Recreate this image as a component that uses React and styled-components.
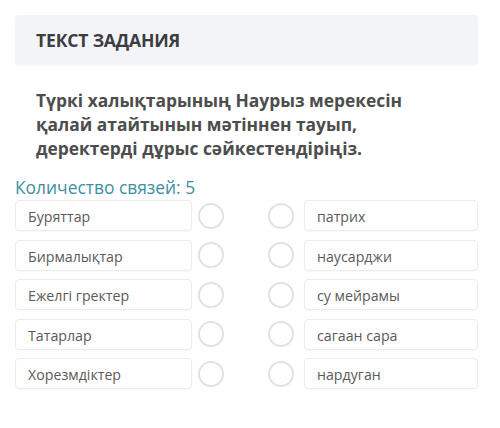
import React from "react";
import styled, { createGlobalStyle } from "styled-components";

const Global = createGlobalStyle`
  html, body { margin: 0; padding: 0; background: #ffffff; }
  body { font-family: "Open Sans", "Noto Sans", sans-serif; }
`;

const Page = styled.div`
  width: 500px;
  height: 428px;
  padding: 15px 22px 0 15px;
  box-sizing: border-box;
  display: flex;
  flex-direction: column;
`;

const HeaderBox = styled.div`
  height: 50px;
  width: 463px;
  background: #f3f4f8;
  border-radius: 4px;
  box-shadow: 0 1px 2px rgba(0, 0, 0, 0.04);
  display: flex;
  align-items: center;
  padding-left: 21px;
  box-sizing: border-box;
  font-weight: 700;
  font-size: 17.6px;
  color: #3b3d42;
  letter-spacing: -0.2px;
`;

const Question = styled.div`
  margin-top: 23px;
  padding-left: 21px;
  font-weight: 700;
  font-size: 17.4px;
  line-height: 24px;
  color: #4d4d4d;
`;

const Count = styled.div`
  margin-top: 17px;
  font-size: 17.4px;
  line-height: 20px;
  color: #3d8fa1;
`;

const Rows = styled.div`
  margin-top: 3px;
  display: flex;
  flex-direction: column;
  gap: 8.5px;
`;

const Row = styled.div`
  display: flex;
  align-items: center;
  height: 31px;
`;

const Item = styled.div`
  width: ${(p) => p.$w}px;
  height: 31px;
  box-sizing: border-box;
  border: 1px solid #ececec;
  border-radius: 4px;
  box-shadow: 0 1px 2px rgba(0, 0, 0, 0.03);
  display: flex;
  align-items: center;
  padding: 2px 0 0 12px;
  font-size: 14.2px;
  color: #5a5a5a;
`;

const Dot = styled.div`
  width: 26px;
  height: 26px;
  box-sizing: border-box;
  border: 2px solid #e2e2e2;
  border-radius: 50%;
  margin-left: ${(p) => p.$ml}px;
  flex: none;
`;

const left = ["Буряттар", "Бирмалықтар", "Ежелгі гректер", "Татарлар", "Хорезмдіктер"];
const right = ["патрих", "наусарджи", "су мейрамы", "сагаан сара", "нардуган"];

export default function App() {
  return (
    <>
      <Global />
      <Page>
        <HeaderBox>ТЕКСТ ЗАДАНИЯ</HeaderBox>
        <Question>
          Түркі халықтарының Наурыз мерекесін
          <br />
          қалай атайтынын мәтіннен тауып,
          <br />
          деректерді дұрыс сәйкестендіріңіз.
        </Question>
        <Count>Количество связей: 5</Count>
        <Rows>
          {left.map((l, i) => (
            <Row key={i}>
              <Item $w={177}>{l}</Item>
              <Dot $ml={6} />
              <Dot $ml={44} />
              <Item $w={174} style={{ marginLeft: 10 }}>{right[i]}</Item>
            </Row>
          ))}
        </Rows>
      </Page>
    </>
  );
}
